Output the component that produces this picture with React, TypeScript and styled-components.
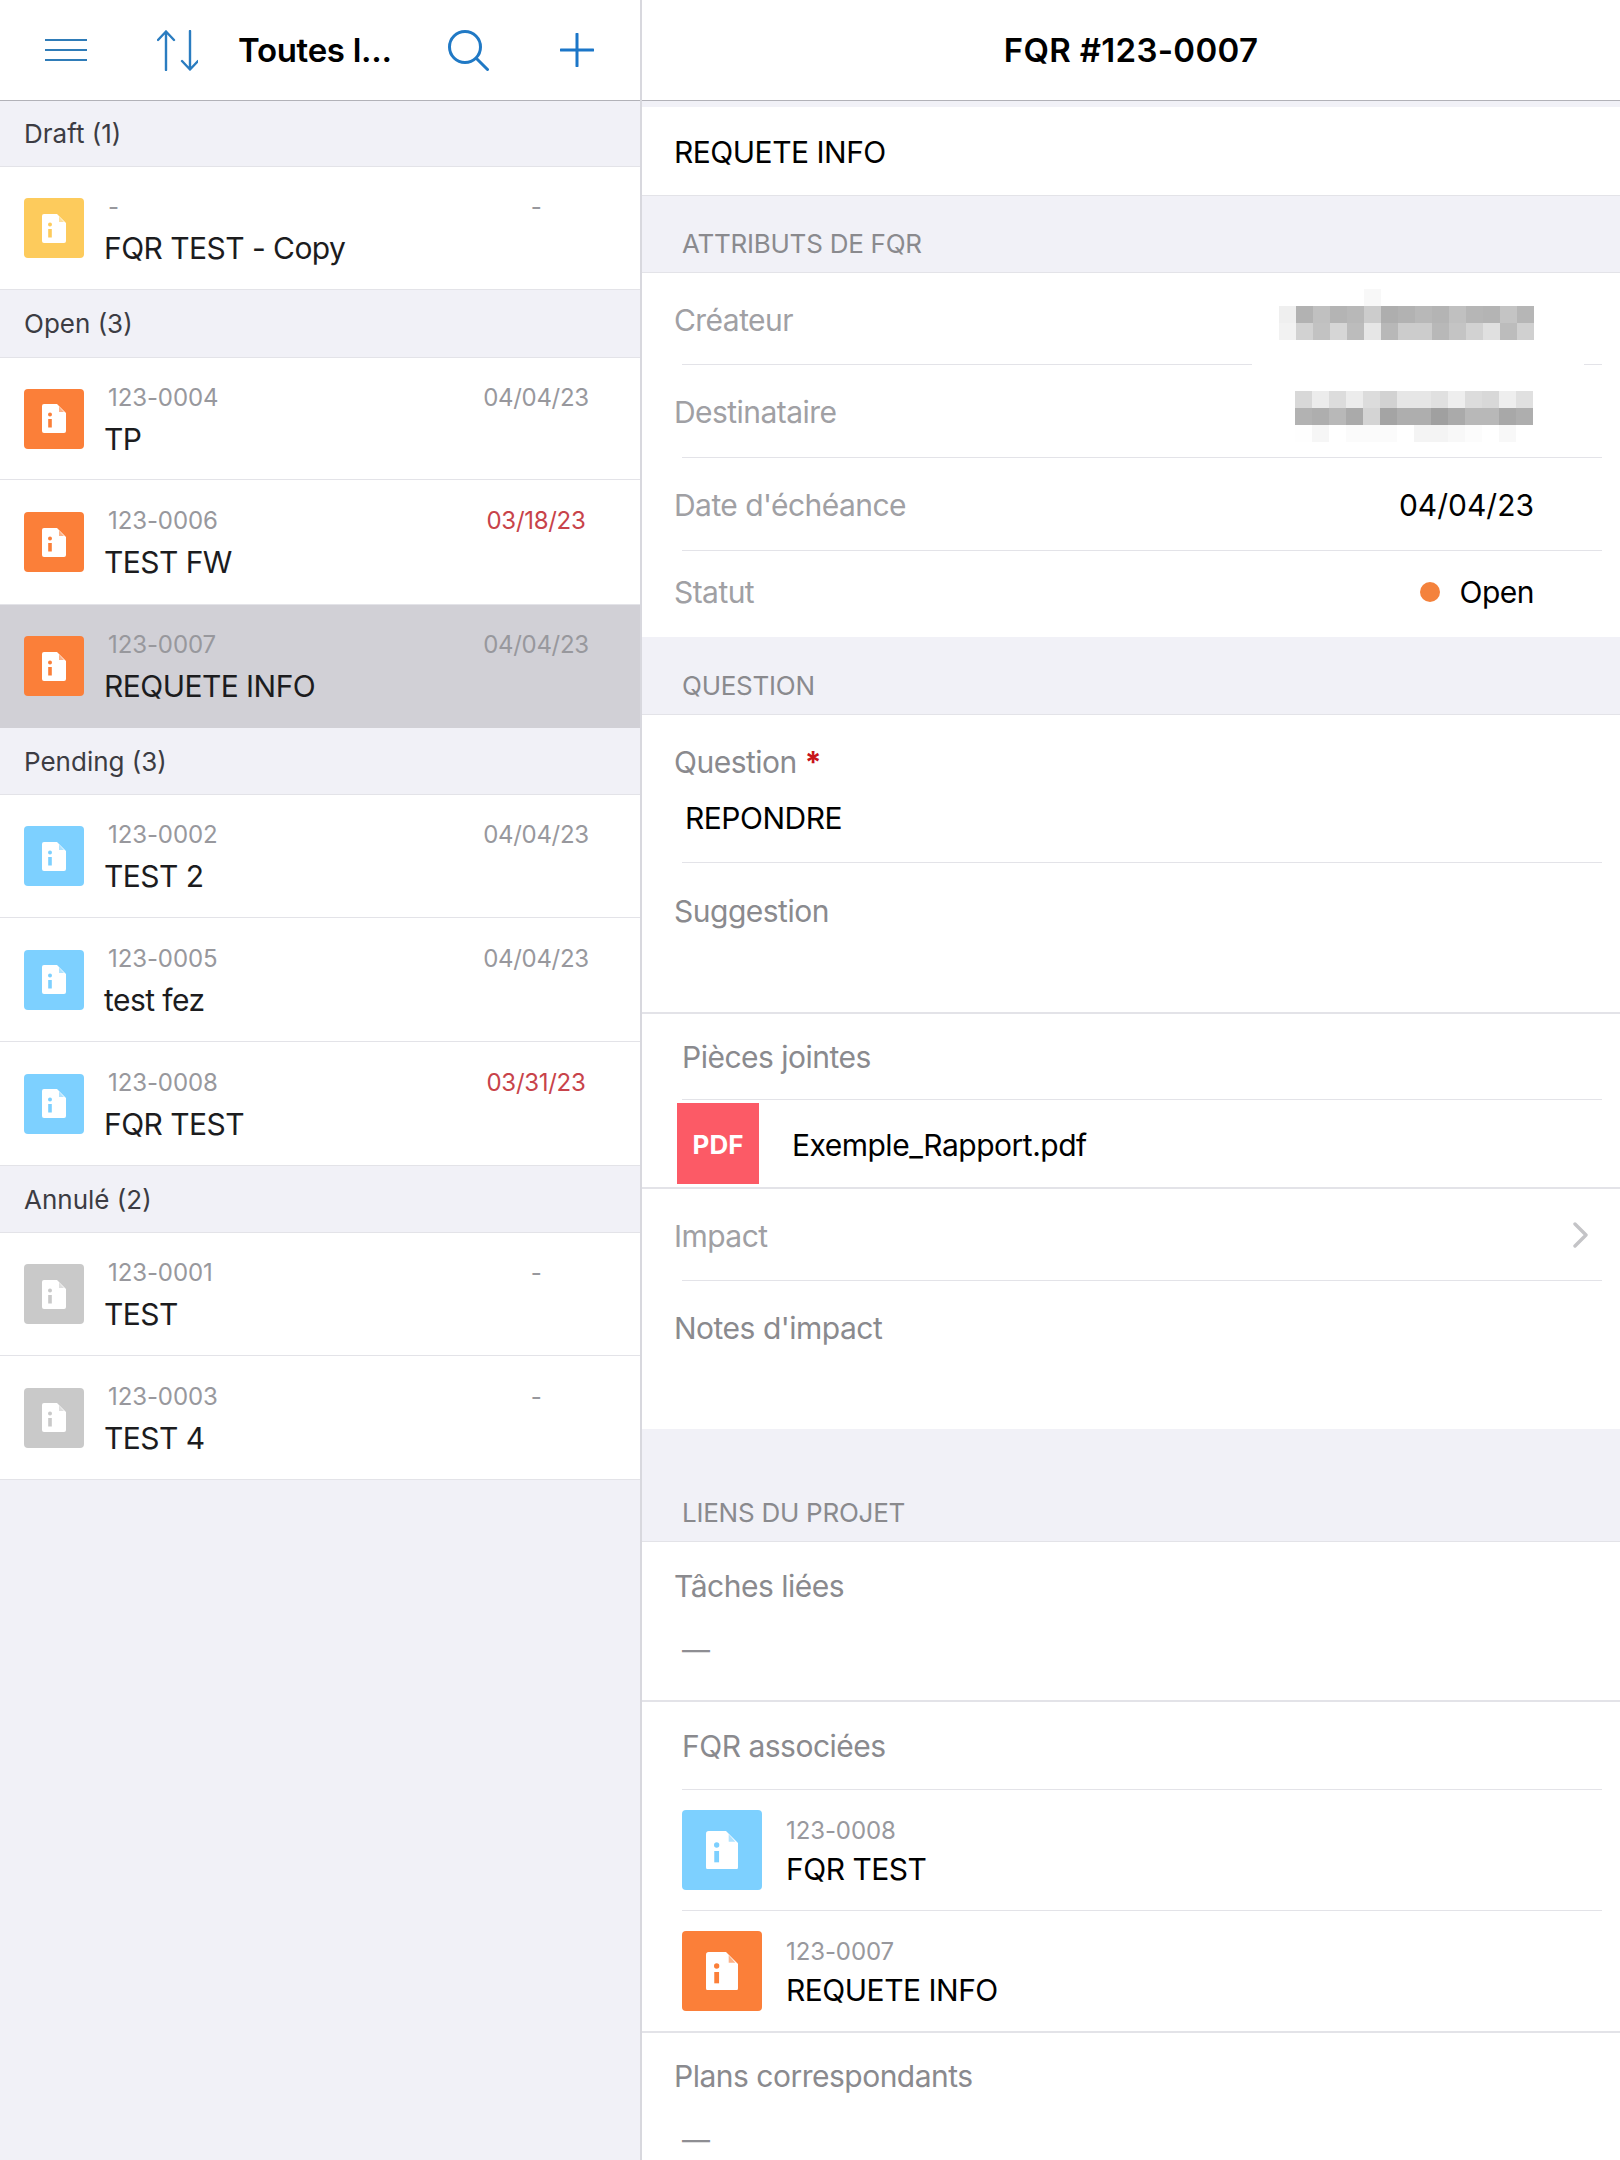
import styled, { createGlobalStyle } from "styled-components";

const ORANGE = "#fb7f39";
const YELLOW = "#fdcb5c";
const BLUE = "#7dd0ff";
const GREY = "#c9c9c9";

type Item = { code: string; title: string; date: string; late?: boolean; height: number; selected?: boolean };
type Group = { name: string; height: number; color: string; items: Item[] };

const groups: Group[] = [
    {
        name: "Draft (1)", height: 66, color: YELLOW,
        items: [{ code: "-", title: "FQR TEST - Copy", date: "-", height: 123 }],
    },
    {
        name: "Open (3)", height: 68, color: ORANGE,
        items: [
            { code: "123-0004", title: "TP", date: "04/04/23", height: 122 },
            { code: "123-0006", title: "TEST FW", date: "03/18/23", late: true, height: 125 },
            { code: "123-0007", title: "REQUETE INFO", date: "04/04/23", height: 123, selected: true },
        ],
    },
    {
        name: "Pending (3)", height: 67, color: BLUE,
        items: [
            { code: "123-0002", title: "TEST 2", date: "04/04/23", height: 123 },
            { code: "123-0005", title: "test fez", date: "04/04/23", height: 124 },
            { code: "123-0008", title: "FQR TEST", date: "03/31/23", late: true, height: 124 },
        ],
    },
    {
        name: "Annulé (2)", height: 67, color: GREY,
        items: [
            { code: "123-0001", title: "TEST", date: "-", height: 123 },
            { code: "123-0003", title: "TEST 4", date: "-", height: 124 },
        ],
    },
];

// flou du nom, ligne par ligne
const creatorPixels = [
    ["fff", "fff", "fff", "fff", "fff", "f8f8f8", "fff", "fff", "fff", "fff", "fff", "fff", "fff", "fff", "fff"],
    ["efefef", "b2b2b2", "c0c0c0", "b4b4b4", "b8b8b8", "cccccc", "aeaeae", "b2b2b2", "b8b8b8", "b4b4b4", "c0c0c0", "b6b6b6", "b4b4b4", "c4c4c4", "b6b6b6"],
    ["f2f2f2", "d2d2d2", "c2c2c2", "d6d6d6", "bcbcbc", "e6e6e6", "b8b8b8", "cccccc", "cccccc", "b8b8b8", "c4c4c4", "d2d2d2", "e0e0e0", "bcbcbc", "d0d0d0"],
];
const recipientPixels = [
    ["d8d8d8", "ececec", "dcdcdc", "ececec", "dcdcdc", "d2d2d2", "e6e6e6", "e6e6e6", "e0e0e0", "eeeeee", "dcdcdc", "d8d8d8", "eeeeee", "e0e0e0"],
    ["b2b2b2", "aeaeae", "b8b8b8", "aaaaaa", "d4d4d4", "a4a4a4", "aeaeae", "aeaeae", "a0a0a0", "aaaaaa", "b8b8b8", "b8b8b8", "a8a8a8", "aeaeae"],
    ["fefefe", "f6f6f6", "fff", "fbfbfb", "fbfbfb", "fbfbfb", "fff", "f4f4f4", "f4f4f4", "f8f8f8", "fcfcfc", "fff", "f8f8f8", "fff"],
];

const FileTile = ({ color, size }: { color: string; size: number }) => (
    <Tile $color={color} $size={size}>
        <svg width={size * 0.4} height={size * 0.4 * 29 / 24} viewBox="0 0 24 29">
            <path d="M2 0H15L24 9V27a2 2 0 0 1-2 2H2a2 2 0 0 1-2-2V2a2 2 0 0 1 2-2Z" fill="#fff" />
            <path d="M17 2.5L22 8H17Z" fill={color} opacity="0.6" />
            <circle cx="8" cy="10.5" r="2" fill={color} />
            <rect x="6.2" y="15" width="3.6" height="8.5" fill={color} />
        </svg>
    </Tile>
);

const Mosaic = ({ rows, top, left, width, height }: { rows: string[][]; top: number; left: number; width: number; height: number }) => (
    <Patch $top={top} $left={left} $width={width} $height={height}>
        {rows.map((row, i) => (
            <PixelRow key={i}>
                {row.map((shade, j) => <Pixel key={j} $shade={shade} />)}
            </PixelRow>
        ))}
    </Patch>
);

const App = () => {
    return (
        <>
            <GlobalStyle />
            <Page>
                <Sidebar>
                    <SideHeader>
                        <svg width="42" height="22" viewBox="0 0 42 22" fill="none" stroke="#2f7cb8" strokeWidth="2.2">
                            <path d="M0 1H42M0 11H42M0 21H42" />
                        </svg>
                        <HeaderSlot $left={70}>
                            <svg width="41" height="41" viewBox="0 0 41 41" fill="none" stroke="#2a7cc0" strokeWidth="2.4" strokeLinecap="round" strokeLinejoin="round">
                                <path d="M9 40V1.5M1 10L9 1.5L17 10" />
                                <path d="M33 1V39.5M25 31L33 39.5L41 31" />
                            </svg>
                        </HeaderSlot>
                        <ListTitle>Toutes l...</ListTitle>
                        <HeaderSlot $left={20}>
                            <svg width="41" height="41" viewBox="0 0 41 41" fill="none" stroke="#2079c5" strokeWidth="3" strokeLinecap="round">
                                <circle cx="17" cy="17" r="15.5" />
                                <path d="M28.5 28.5L39.5 39.5" />
                            </svg>
                        </HeaderSlot>
                        <HeaderSlot $left={71}>
                            <svg width="34" height="34" viewBox="0 0 34 34" fill="none" stroke="#1b76c8" strokeWidth="3" strokeLinecap="round">
                                <path d="M17 1V33M1 17H33" />
                            </svg>
                        </HeaderSlot>
                    </SideHeader>
                    {groups.map((group) => (
                        <section key={group.name}>
                            <GroupName $height={group.height}>{group.name}</GroupName>
                            {group.items.map((item) => (
                                <ListRow key={item.code + item.title} $height={item.height} $selected={item.selected}>
                                    <FileTile color={group.color} size={60} />
                                    <RowText>
                                        <RowMeta>
                                            <RowCode>{item.code}</RowCode>
                                            <RowDate $late={item.late}>{item.date}</RowDate>
                                        </RowMeta>
                                        <RowTitle>{item.title}</RowTitle>
                                    </RowText>
                                </ListRow>
                            ))}
                        </section>
                    ))}
                </Sidebar>

                <Detail>
                    <DetailHeader>FQR #123-0007</DetailHeader>
                    <DetailTitle>REQUETE INFO</DetailTitle>

                    <SectionHead $height={77}>ATTRIBUTS DE FQR</SectionHead>
                    <Panel>
                        <AttrRow $height={91} $top={3}>
                            <AttrLabel>Créateur</AttrLabel>
                            <Mosaic rows={creatorPixels} top={16} left={610} width={332} height={76} />
                        </AttrRow>
                        <Divider />
                        <AttrRow $height={92} $top={2}>
                            <AttrLabel>Destinataire</AttrLabel>
                            <Mosaic rows={recipientPixels} top={26} left={653} width={238} height={51} />
                        </AttrRow>
                        <Divider />
                        <AttrRow $height={92} $top={2}>
                            <AttrLabel>Date d'échéance</AttrLabel>
                            <AttrValue>04/04/23</AttrValue>
                        </AttrRow>
                        <Divider />
                        <AttrRow $height={86} $bottom={5}>
                            <AttrLabel>Statut</AttrLabel>
                            <AttrValue>
                                <StatusDot />
                                <StatusText>Open</StatusText>
                            </AttrValue>
                        </AttrRow>
                    </Panel>

                    <SectionHead $height={78}>QUESTION</SectionHead>
                    <Panel>
                        <FieldBlock $height={147} $top={29}>
                            <FieldLabel>Question <Required>*</Required></FieldLabel>
                            <FieldAnswer>REPONDRE</FieldAnswer>
                        </FieldBlock>
                        <Divider />
                        <FieldBlock $height={149}>
                            <FieldLabel>Suggestion</FieldLabel>
                        </FieldBlock>
                        <ThickLine />
                        <SubHead $height={85}>Pièces jointes</SubHead>
                        <Divider />
                        <AttachmentRow>
                            <PdfTile>PDF</PdfTile>
                            <FileName>Exemple_Rapport.pdf</FileName>
                        </AttachmentRow>
                        <ThickLine />
                        <AttrRow $height={91} $top={3}>
                            <AttrLabel>Impact</AttrLabel>
                            <Chevron width="15" height="26" viewBox="0 0 15 26" fill="none" stroke="#c4c4c7" strokeWidth="3.4" strokeLinecap="round" strokeLinejoin="round">
                                <path d="M2 2L13 13L2 24" />
                            </Chevron>
                        </AttrRow>
                        <Divider />
                        <FieldBlock $height={148} $top={29}>
                            <FieldLabel>Notes d'impact</FieldLabel>
                        </FieldBlock>
                    </Panel>

                    <SectionHead $height={113}>LIENS DU PROJET</SectionHead>
                    <Panel>
                        <FieldBlock $height={158} $top={26}>
                            <FieldLabel>Tâches liées</FieldLabel>
                            <EmptyDash>—</EmptyDash>
                        </FieldBlock>
                        <ThickLine />
                        <SubHead $height={87}>FQR associées</SubHead>
                        <Divider />
                        <LinkedRow>
                            <FileTile color={BLUE} size={80} />
                            <LinkedText>
                                <RowCode>123-0008</RowCode>
                                <LinkedTitle>FQR TEST</LinkedTitle>
                            </LinkedText>
                        </LinkedRow>
                        <Divider />
                        <LinkedRow>
                            <FileTile color={ORANGE} size={80} />
                            <LinkedText>
                                <RowCode>123-0007</RowCode>
                                <LinkedTitle>REQUETE INFO</LinkedTitle>
                            </LinkedText>
                        </LinkedRow>
                        <ThickLine />
                        <FieldBlock $height={127} $top={25}>
                            <FieldLabel>Plans correspondants</FieldLabel>
                            <EmptyDash>—</EmptyDash>
                        </FieldBlock>
                    </Panel>
                </Detail>
            </Page>
        </>
    );
};

export default App;

const GlobalStyle = createGlobalStyle`
    html, body {
        margin: 0;
        padding: 0;
        background: #f1f1f7;
    }
    * {
        box-sizing: border-box;
    }
    body {
        font-family: Inter, "Liberation Sans", sans-serif;
    }
`;

const Page = styled.div`
    display: flex;
    width: 1620px;
    height: 2160px;
    overflow: hidden;
    background: #f1f1f7;
`;

const Sidebar = styled.aside`
    width: 642px;
    flex-shrink: 0;
    border-right: 2px solid #d8d8de;
`;

const SideHeader = styled.header`
    display: flex;
    align-items: center;
    height: 101px;
    padding-left: 45px;
    background: #fff;
    border-bottom: 1.5px solid #b2b2b8;
`;

const HeaderSlot = styled.div<{ $left: number }>`
    display: flex;
    margin-left: ${(p) => p.$left}px;
`;

const ListTitle = styled.h1`
    width: 190px;
    margin: 0 0 0 40px;
    color: #000;
    font-size: 33px;
    font-weight: 600;
    letter-spacing: -0.3px;
    white-space: nowrap;
`;

const GroupName = styled.div<{ $height: number }>`
    display: flex;
    align-items: center;
    height: ${(p) => p.$height}px;
    padding-left: 24px;
    color: #3c3c43;
    font-size: 26px;
    border-bottom: 1px solid #e3e3e8;
`;

const ListRow = styled.div<{ $height: number; $selected?: boolean }>`
    display: flex;
    align-items: center;
    gap: 20px;
    height: ${(p) => p.$height}px;
    padding-left: 24px;
    background: ${(p) => (p.$selected ? "#d1d0d6" : "#fff")};
    border-bottom: 1px solid ${(p) => (p.$selected ? "#d1d0d6" : "#e3e3e8")};
`;

const Tile = styled.div<{ $color: string; $size: number }>`
    display: flex;
    align-items: center;
    justify-content: center;
    width: ${(p) => p.$size}px;
    height: ${(p) => p.$size}px;
    flex-shrink: 0;
    border-radius: 4px;
    background: ${(p) => p.$color};
`;

const RowText = styled.div`
    display: flex;
    flex-direction: column;
    gap: 8px;
    width: 487px;
    padding-top: 2px;
`;

const RowMeta = styled.div`
    display: flex;
    justify-content: space-between;
    padding-left: 4px;
`;

const RowCode = styled.span`
    color: #98989d;
    font-size: 24px;
    line-height: 30px;
    letter-spacing: -0.1px;
`;

const RowDate = styled.span<{ $late?: boolean }>`
    width: 110px;
    color: ${(p) => (p.$late ? "#c8434a" : "#98989d")};
    font-size: 24px;
    line-height: 30px;
    letter-spacing: -0.3px;
    text-align: center;
`;

const RowTitle = styled.div`
    color: #1c1c1e;
    font-size: 30px;
    line-height: 36px;
    letter-spacing: -0.55px;
`;

const Detail = styled.main`
    flex: 1;
    min-width: 0;
`;

const DetailHeader = styled.header`
    display: flex;
    align-items: center;
    justify-content: center;
    height: 101px;
    margin-bottom: 6px;
    background: #fff;
    color: #000;
    font-size: 33px;
    font-weight: 600;
    letter-spacing: 0.3px;
    border-bottom: 1.5px solid #b2b2b8;
`;

const DetailTitle = styled.div`
    display: flex;
    align-items: center;
    height: 89px;
    padding: 2px 0 0 32px;
    background: #fff;
    color: #000;
    font-size: 30px;
    letter-spacing: -0.5px;
    border-bottom: 1px solid #e3e3e8;
`;

const SectionHead = styled.div<{ $height: number }>`
    display: flex;
    align-items: flex-end;
    height: ${(p) => p.$height}px;
    padding: 0 0 12px 40px;
    color: #8a8a8e;
    font-size: 26px;
    line-height: 32px;
    letter-spacing: -0.25px;
    border-bottom: 1px solid #e3e3e8;
`;

const Panel = styled.div`
    background: #fff;
`;

const AttrRow = styled.div<{ $height: number; $top?: number; $bottom?: number }>`
    position: relative;
    display: flex;
    align-items: center;
    justify-content: space-between;
    height: ${(p) => p.$height}px;
    padding: ${(p) => p.$top ?? 0}px 86px ${(p) => p.$bottom ?? 0}px 32px;
`;

const AttrLabel = styled.span`
    color: #a0a0a4;
    font-size: 30px;
    letter-spacing: -0.55px;
`;

const AttrValue = styled.span`
    display: flex;
    align-items: center;
    gap: 19px;
    color: #000;
    font-size: 30px;
`;

const StatusText = styled.span`
    letter-spacing: -0.5px;
`;

const StatusDot = styled.i`
    width: 20px;
    height: 20px;
    border-radius: 50%;
    background: #f4823c;
`;

const Chevron = styled.svg`
    margin: 0 -54px 3px 0;
`;

const Patch = styled.div<{ $top: number; $left: number; $width: number; $height: number }>`
    position: absolute;
    top: ${(p) => p.$top}px;
    left: ${(p) => p.$left}px;
    width: ${(p) => p.$width}px;
    height: ${(p) => p.$height}px;
    padding-left: ${(p) => (p.$width > 300 ? 27 : 0)}px;
    background: #fff;
`;

const PixelRow = styled.div`
    display: flex;
`;

const Pixel = styled.i<{ $shade: string }>`
    width: 17px;
    height: 17px;
    background: #${(p) => p.$shade};
`;

const Divider = styled.div`
    height: 1px;
    margin: 0 18px 0 40px;
    background: #e3e3e8;
`;

const ThickLine = styled.div`
    height: 2px;
    background: #e3e3e8;
`;

const FieldBlock = styled.div<{ $height: number; $top?: number }>`
    height: ${(p) => p.$height}px;
    padding: ${(p) => p.$top ?? 30}px 0 0 32px;
`;

const FieldLabel = styled.div`
    color: #8a8a8e;
    font-size: 30px;
    line-height: 36px;
    letter-spacing: -0.5px;
`;

const Required = styled.span`
    color: #c8151b;
    font-weight: 700;
`;

const FieldAnswer = styled.div`
    margin: 20px 0 0 11px;
    color: #000;
    font-size: 30px;
    line-height: 36px;
    letter-spacing: -0.5px;
`;

const EmptyDash = styled.div`
    margin: 28px 0 0 8px;
    color: #8e8e93;
    font-size: 28px;
    line-height: 36px;
`;

const SubHead = styled.div<{ $height: number }>`
    display: flex;
    align-items: center;
    height: ${(p) => p.$height}px;
    padding: 0 0 0 40px;
    color: #8a8a8e;
    font-size: 30px;
    letter-spacing: -0.5px;
`;

const AttachmentRow = styled.div`
    display: flex;
    align-items: center;
    gap: 33px;
    height: 87px;
    padding-left: 35px;
`;

const PdfTile = styled.div`
    display: flex;
    align-items: center;
    justify-content: center;
    width: 82px;
    height: 81px;
    padding-top: 2px;
    background: #fc5a66;
    color: #fff;
    font-size: 26px;
    font-weight: 700;
`;

const FileName = styled.span`
    padding-top: 2px;
    color: #000;
    font-size: 30px;
    letter-spacing: -0.5px;
`;

const LinkedRow = styled.div`
    display: flex;
    align-items: center;
    gap: 24px;
    height: 120px;
    padding-left: 40px;
`;

const LinkedText = styled.div`
    display: flex;
    flex-direction: column;
    gap: 5px;
    padding-top: 2px;
`;

const LinkedTitle = styled.div`
    color: #000;
    font-size: 30px;
    line-height: 36px;
    letter-spacing: -0.5px;
`;
